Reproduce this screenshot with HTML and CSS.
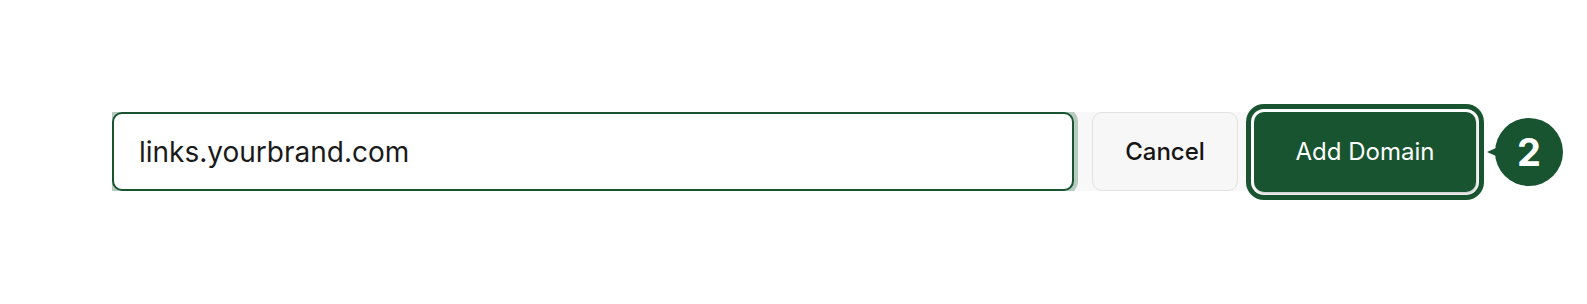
FILE: index.html
```html
<!DOCTYPE html>
<html lang="en">
<head>
<meta charset="utf-8">
<title>Add Domain</title>
<link rel="stylesheet" href="styles.css">
</head>
<body>
<div class="stage">
  <div class="row">
    <div class="field-wrap">
      <input class="field" type="text" value="links.yourbrand.com">
    </div>
    <button class="btn btn-cancel" type="button">Cancel</button>
    <button class="btn btn-add" type="button">Add Domain</button>
  </div>
  <div class="badge"><span class="pointer"></span>2</div>
</div>
</body>
</html>
```
FILE: styles.css
```css
html, body {
  margin: 0;
  background: #ffffff;
}
body {
  font-family: Inter, "Noto Sans", "Liberation Sans", sans-serif;
  color: #1a1a1a;
  min-height: 304px;
}
.stage {
  display: flex;
  align-items: center;
  padding: 112px 0 40px 112px;
}
.row {
  display: flex;
  align-items: center;
  background: #f8f8f8;
  height: 79px;
}
.field-wrap {
  overflow: hidden;
  padding-right: 4px;
  height: 79px;
}
.field {
  box-sizing: border-box;
  width: 962px;
  height: 79px;
  margin: 0;
  border: 2px solid #17542f;
  border-radius: 10px;
  background: #ffffff;
  box-shadow: 0 0 0 4px rgba(23, 84, 47, 0.28);
  padding: 0 0 0 25px;
  font-family: inherit;
  font-size: 28px;
  color: #1a1a1a;
  outline: none;
}
.btn {
  box-sizing: border-box;
  height: 79px;
  margin: 0;
  border-radius: 10px;
  font-family: inherit;
  cursor: pointer;
}
.btn-cancel {
  margin-left: 14px;
  width: 146px;
  background: #f7f7f7;
  border: 1px solid #e2e2e2;
  color: #151515;
  font-size: 24px;
  font-weight: 500;
}
.btn-add {
  margin-left: 16px;
  width: 222px;
  height: 80px;
  background: #17542f;
  border: none;
  color: #ffffff;
  font-size: 24px;
  font-weight: 400;
  box-shadow: 1px 2px 3px rgba(0, 0, 0, 0.2), 0 0 0 3px #ffffff, 0 0 0 8px #17542f;
}
.badge {
  position: relative;
  margin-left: 19px;
  width: 68px;
  height: 68px;
  border-radius: 50%;
  background: #17542f;
  color: #ffffff;
  font-size: 38px;
  font-weight: 700;
  display: flex;
  align-items: center;
  justify-content: center;
}
.pointer {
  position: absolute;
  left: -8px;
  top: 30px;
  width: 0;
  height: 0;
  border-top: 4px solid transparent;
  border-bottom: 4px solid transparent;
  border-right: 9px solid #17542f;
}
```
